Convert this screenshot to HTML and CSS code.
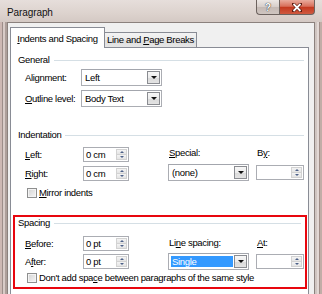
FILE: index.html
```html
<!DOCTYPE html>
<html>
<head>
<meta charset="utf-8">
<title>Paragraph</title>
<link rel="stylesheet" href="styles.css">
</head>
<body>
<div class="window">
  <div class="titlebar">
    <span class="title">Paragraph</span>
    <div class="caps">
      <div class="cap help">?</div>
      <div class="cap close">
        <svg width="10" height="9" viewBox="0 0 10 9"><path d="M1.5 1 L8.5 8 M8.5 1 L1.5 8" stroke="#5a1a10" stroke-width="3.2" stroke-linecap="square"/><path d="M1.5 1 L8.5 8 M8.5 1 L1.5 8" stroke="#fff" stroke-width="1.8"/></svg>
      </div>
    </div>
  </div>
  <div class="client">
    <div class="tabs">
      <div class="tab active"><u>I</u>ndents and Spacing</div>
      <div class="tab inactive">Line and <u>P</u>age Breaks</div>
    </div>
    <div class="panel">
      <div class="group general">
        <div class="ghead"><span>General</span><i></i></div>
        <div class="row first"><span class="lbl l56">Ali<u>g</u>nment:</span><div class="combo w81"><span class="val">Left</span><b class="drop"></b></div></div>
        <div class="row second"><span class="lbl l56"><u>O</u>utline level:</span><div class="combo w81"><span class="val">Body Text</span><b class="drop"></b></div></div>
      </div>

      <div class="group indentation">
        <div class="ghead"><span>Indentation</span><i></i></div>
        <div class="gbody">
          <div class="col-main">
            <div class="row"><span class="lbl l58"><u>L</u>eft:</span><div class="spin"><span class="val">0 cm</span><span class="sbtns"><b class="up"></b><b class="dn"></b></span></div></div>
            <div class="row next"><span class="lbl l58"><u>R</u>ight:</span><div class="spin"><span class="val">0 cm</span><span class="sbtns"><b class="up"></b><b class="dn"></b></span></div></div>
            <div class="check mirror"><span class="cb"></span><span><u>M</u>irror indents</span></div>
          </div>
          <div class="col-special">
            <div class="clbl"><u>S</u>pecial:</div>
            <div class="combo w81 c-special"><span class="val">(none)</span><b class="drop"></b></div>
          </div>
          <div class="col-by">
            <div class="clbl">B<u>y</u>:</div>
            <div class="spin w48 s-by"><span class="val"></span><span class="sbtns"><b class="up"></b><b class="dn"></b></span></div>
          </div>
        </div>
      </div>

      <div class="group spacing">
        <div class="ghead"><span>Spacing</span><i></i></div>
        <div class="gbody">
          <div class="col-main">
            <div class="row"><span class="lbl l58"><u>B</u>efore:</span><div class="spin"><span class="val">0 pt</span><span class="sbtns"><b class="up"></b><b class="dn"></b></span></div></div>
            <div class="row next2"><span class="lbl l58">A<u>f</u>ter:</span><div class="spin"><span class="val">0 pt</span><span class="sbtns"><b class="up"></b><b class="dn"></b></span></div></div>
          </div>
          <div class="col-special">
            <div class="clbl">Li<u>n</u>e spacing:</div>
            <div class="combo w81 c-line"><span class="val"><span class="sel">Single</span></span><b class="drop"></b></div>
          </div>
          <div class="col-by">
            <div class="clbl"><u>A</u>t:</div>
            <div class="spin w48 s-at"><span class="val"></span><span class="sbtns"><b class="up"></b><b class="dn"></b></span></div>
          </div>
        </div>
        <div class="check dontadd"><span class="cb"></span><span>Don't add spa<u>c</u>e between paragraphs of the same style</span></div>
      </div>
    </div>
  </div>
</div>
</body>
</html>
```
FILE: styles.css
```css
* { box-sizing: border-box; }
html, body { margin: 0; padding: 0; }
body {
  width: 322px;
  height: 294px;
  overflow: hidden;
  font-family: "Liberation Sans", Arial, sans-serif;
  font-size: 9.5px;
  color: #000;
  letter-spacing: -0.33px;
}
u { text-decoration: underline; text-underline-offset: 1px; }

.window {
  height: 294px;
  display: flex;
  flex-direction: column;
  background:
    linear-gradient(to right, #cdb8b3 0, #cdb8b3 2px, #9c8d89 2px, #9c8d89 3px, #d8cbc7 3px, #d8cbc7 5px, #ad9f9a 5px) 0 22px / 7px 100% no-repeat,
    linear-gradient(to right, #cfc5c1 0, #cfc5c1 2px, #e2d8d5 2px, #e2d8d5 4px, #a08e88 4px, #a08e88 5px, #c1ada7 5px) 315px 22px / 7px 100% no-repeat,
    linear-gradient(to bottom, #e6dedb 0, #dcd2cd 14px, #d4c9c4 22px, #cdbfba 100%);
}

.titlebar {
  height: 22px;
  flex: none;
  display: flex;
  align-items: flex-start;
  padding-left: 7px;
}
.title {
  margin-top: 6px;
  line-height: 13px;
  font-size: 10px;
  letter-spacing: -0.1px;
  color: #111;
}
.caps {
  margin-left: auto;
  margin-right: 7px;
  display: flex;
}
.cap {
  height: 15px;
  border: 1px solid #6c625e;
  border-top: none;
  display: flex;
  align-items: center;
  justify-content: center;
}
.help {
  width: 23px;
  border-right: none;
  border-radius: 0 0 0 4px;
  background: linear-gradient(#ece7e4, #d6cdc9 50%, #c4b9b4 51%, #cfc5c0);
  color: #fff;
  font-weight: bold;
  font-size: 10px;
  letter-spacing: 0;
  text-shadow: 0 0 1px #333, 0 0 1px #333;
}
.close {
  width: 36px;
  border-radius: 0 0 4px 0;
  background: linear-gradient(#e9ab9d, #d86f5b 45%, #c4391f 52%, #cf5a41);
}

.client {
  flex: 1;
  display: flex;
  flex-direction: column;
  margin: 0 7px;
  border: 1px solid #8b817d;
  border-bottom: none;
  background: #f0f0f0;
  padding: 4px 5px 0 2px;
}

.tabs {
  flex: none;
  height: 20px;
  display: flex;
  align-items: flex-end;
}
.tab {
  border: 1px solid #898c95;
  border-bottom: none;
  white-space: nowrap;
  text-align: center;
  line-height: 12px;
}
.tab.active {
  width: 95px;
  height: 21px;
  margin-bottom: -1px;
  padding-top: 5px;
  background: #fff;
  position: relative;
  z-index: 1;
}
.tab.inactive {
  width: 93px;
  height: 15px;
  margin-left: -1px;
  padding-top: 1px;
  background: linear-gradient(#f3f3f3, #ebebeb 50%, #dedede 51%, #e5e5e5);
}

.panel {
  flex: 1;
  background: #fff;
  border: 1px solid #898c95;
  border-bottom: none;
}

.ghead {
  display: flex;
  align-items: center;
  height: 12px;
  line-height: 12px;
  gap: 4px;
}
.ghead i {
  flex: 1;
  height: 1px;
  background: #d5dfe5;
}
.general .ghead { margin: 6px 4px 0 7px; }
.indentation .ghead { margin: 22px 4px 0 7px; }

.row {
  display: flex;
  align-items: center;
}
.lbl { flex: none; line-height: 12px; }
.l56 { width: 56px; }
.l58 { width: 58px; }

.general .row { margin-left: 14px; }
.general .row.first { margin-top: 3px; }
.general .row.second { margin-top: 4px; }

.combo {
  display: flex;
  align-items: center;
  height: 17px;
  border: 1px solid #abadb3;
  border-top-color: #a3a6ad;
  background: #fff;
  padding: 1px;
}
.w81 { width: 81px; }
.combo .val {
  flex: 1;
  align-self: stretch;
  display: flex;
  align-items: center;
  padding-left: 2px;
  line-height: 12px;
}
.drop {
  flex: none;
  width: 13px;
  height: 13px;
  border: 1px solid #8a8c91;
  background: linear-gradient(#f7f7f7, #ececec 50%, #dadada 51%, #e3e3e3);
  display: flex;
  align-items: center;
  justify-content: center;
}
.drop::after {
  content: "";
  border-left: 3px solid transparent;
  border-right: 3px solid transparent;
  border-top: 3px solid #111;
}

.spin {
  display: flex;
  width: 46px;
  height: 15px;
  border: 1px solid #abadb3;
  background: #fff;
  padding: 1px;
}
.w48 { width: 48px; }
.spin .val {
  flex: 1;
  line-height: 11px;
  padding-left: 1px;
}
.sbtns {
  flex: none;
  width: 11px;
  display: flex;
  flex-direction: column;
}
.sbtns b {
  flex: 1;
  display: flex;
  align-items: center;
  justify-content: center;
  background: linear-gradient(#f4f4f4, #e4e4e4);
  border: 1px solid #d2d2d2;
}
.sbtns b.dn { border-top: none; }
.sbtns b.up::after {
  content: "";
  border-left: 2px solid transparent;
  border-right: 2px solid transparent;
  border-bottom: 2px solid #4c6088;
}
.sbtns b.dn::after {
  content: "";
  border-left: 2px solid transparent;
  border-right: 2px solid transparent;
  border-top: 2px solid #4c6088;
}

.gbody {
  display: flex;
  align-items: flex-start;
}
.indentation .gbody { margin-top: 6px; }
.indentation .col-main { margin-left: 14px; }
.row.next { margin-top: 4px; }
.row.next2 { margin-top: 3px; }

.col-special { margin-left: 39px; width: 81px; }
.col-by { margin-left: 7px; width: 48px; }
.clbl { line-height: 12px; padding-left: 1px; white-space: nowrap; }
.c-special { margin-top: 5px; }
.s-by { margin-top: 6px; }

.check {
  display: flex;
  align-items: center;
  height: 12px;
  line-height: 12px;
  white-space: nowrap;
}
.cb {
  flex: none;
  width: 10px;
  height: 10px;
  margin-right: 2px;
  border: 1px solid #8e8f8f;
  background: linear-gradient(135deg, #d3d3d3, #f6f6f6);
  box-shadow: inset 0 0 0 1px #f4f4f4;
}
.check.mirror { margin-top: 6px; margin-left: 2px; }

.spacing {
  margin: 16px 1px 0 2px;
  border: 2px solid #e8060e;
  padding-bottom: 3px;
}
.spacing .ghead { margin: 0 4px 0 3px; }
.spacing .gbody { margin-top: 7px; }
.spacing .col-main { margin-left: 10px; }
.spacing .clbl { padding-top: 1px; }
.c-line { margin-top: 4px; }
.s-at { margin-top: 5px; }
.c-line .val { padding-left: 1px; }
.sel {
  display: block;
  width: 62px;
  height: 11px;
  line-height: 11px;
  padding-left: 1px;
  background: #3399ff;
  color: #fff;
}
.check.dontadd { margin-top: 2px; margin-left: 12px; }
```
